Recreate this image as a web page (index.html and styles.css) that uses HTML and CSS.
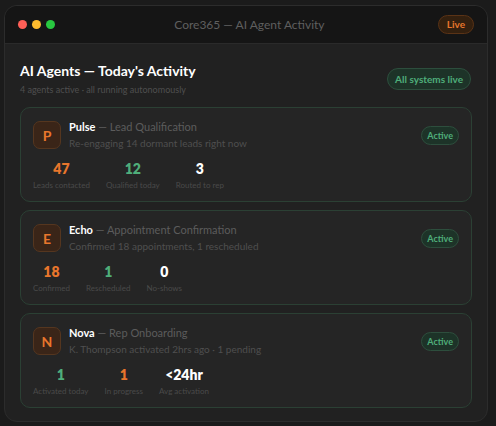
FILE: index.html
```html
<!DOCTYPE html>
<html>
<head>
<meta charset="utf-8">
<link rel="stylesheet" href="styles.css">
</head>
<body>
<div class="window">
  <div class="titlebar">
    <div class="dots">
      <span class="dot dot-red"></span>
      <span class="dot dot-yellow"></span>
      <span class="dot dot-green"></span>
    </div>
    <div class="wtitle">Core365 — AI Agent Activity</div>
    <span class="live">Live</span>
  </div>
  <div class="content">
    <div class="head">
      <div>
        <h1 class="h1">AI Agents — Today's Activity</h1>
        <div class="sub">4 agents active · all running autonomously</div>
      </div>
      <span class="syslive">All systems live</span>
    </div>

    <div class="card">
      <div class="row">
        <div class="avatar">P</div>
        <div class="info">
          <div class="name"><b>Pulse</b> — Lead Qualification</div>
          <div class="desc">Re-engaging 14 dormant leads right now</div>
        </div>
        <span class="active">Active</span>
      </div>
      <div class="stats">
        <div class="stat"><div class="num orange">47</div><div class="lbl">Leads contacted</div></div>
        <div class="stat"><div class="num green">12</div><div class="lbl">Qualified today</div></div>
        <div class="stat"><div class="num white">3</div><div class="lbl">Routed to rep</div></div>
      </div>
    </div>

    <div class="card">
      <div class="row">
        <div class="avatar">E</div>
        <div class="info">
          <div class="name"><b>Echo</b> — Appointment Confirmation</div>
          <div class="desc">Confirmed 18 appointments, 1 rescheduled</div>
        </div>
        <span class="active">Active</span>
      </div>
      <div class="stats">
        <div class="stat"><div class="num orange">18</div><div class="lbl">Confirmed</div></div>
        <div class="stat"><div class="num green">1</div><div class="lbl">Rescheduled</div></div>
        <div class="stat"><div class="num white">0</div><div class="lbl">No-shows</div></div>
      </div>
    </div>

    <div class="card">
      <div class="row">
        <div class="avatar">N</div>
        <div class="info">
          <div class="name"><b>Nova</b> — Rep Onboarding</div>
          <div class="desc">K. Thompson activated 2hrs ago · 1 pending</div>
        </div>
        <span class="active">Active</span>
      </div>
      <div class="stats">
        <div class="stat"><div class="num green">1</div><div class="lbl">Activated today</div></div>
        <div class="stat"><div class="num orange">1</div><div class="lbl">In progress</div></div>
        <div class="stat"><div class="num white">&lt;24hr</div><div class="lbl">Avg activation</div></div>
      </div>
    </div>
  </div>
</div>
</body>
</html>
```

FILE: styles.css
```css
* { box-sizing: border-box; }
html, body { margin: 0; padding: 0; }
body {
  background: #1b1b1b;
  font-family: Lato, "Liberation Sans", sans-serif;
  width: 496px;
  height: 426px;
  overflow: hidden;
  padding: 5px 8px 0 4px;
}
.window {
  width: 484px;
  height: 417px;
  background: #212121;
  border: 1px solid #2c2c2c;
  border-radius: 13px;
  overflow: hidden;
  display: flex;
  flex-direction: column;
}
.titlebar {
  height: 38px;
  flex: none;
  background: #151515;
  border-bottom: 1px solid #2a2a2a;
  display: flex;
  align-items: center;
  padding: 0 13px 0 13px;
}
.dots { display: flex; gap: 5px; }
.dot { width: 9px; height: 9px; border-radius: 50%; display: block; }
.dot-red { background: #ff5f57; }
.dot-yellow { background: #febc2e; }
.dot-green { background: #28c840; }
.wtitle {
  flex: 1;
  text-align: center;
  color: #5f5f5f;
  font-size: 12px;
  padding-left: 6px;
}
.live {
  font-size: 10px;
  font-weight: 700;
  color: #e8762c;
  background: #33200f;
  border: 1px solid #5a3316;
  border-radius: 10px;
  padding: 3px 8px;
  line-height: 11px;
}
.content {
  padding: 18px 15px 0 15px;
  display: flex;
  flex-direction: column;
  gap: 8px;
}
.head {
  display: flex;
  justify-content: space-between;
  align-items: center;
  margin-bottom: 3px;
}
.h1 {
  margin: 0;
  font-size: 14px;
  font-weight: 700;
  color: #ffffff;
  line-height: 18px;
}
.sub {
  margin-top: 4px;
  font-size: 9px;
  color: #4f4f4f;
  line-height: 12px;
}
.syslive {
  font-size: 10px;
  font-weight: 700;
  color: #4fae7a;
  background: #1d3328;
  border: 1px solid #2d4e3d;
  border-radius: 11px;
  padding: 5px 7px;
  line-height: 10px;
  margin-right: 1px;
}
.card {
  background: #252525;
  border: 1px solid #2b4034;
  border-radius: 10px;
  padding: 12px 12px 11px 12px;
  height: 95px;
}
.row {
  display: flex;
  align-items: center;
}
.avatar {
  width: 28px;
  height: 28px;
  border-radius: 7px;
  background: #3a2518;
  border: 1px solid #55361f;
  color: #e8762c;
  font-weight: 700;
  font-size: 14px;
  display: flex;
  align-items: center;
  justify-content: center;
  flex: none;
}
.info {
  flex: 1;
  margin-left: 8px;
}
.name {
  font-size: 11px;
  color: #5c5c5c;
  line-height: 14px;
}
.name b { color: #ffffff; font-weight: 700; }
.desc {
  font-size: 10px;
  color: #4f4f4f;
  line-height: 13px;
  margin-top: 3px;
}
.active {
  font-size: 9px;
  font-weight: 700;
  color: #4fae7a;
  background: #1d3328;
  border: 1px solid #2d4e3d;
  border-radius: 10px;
  padding: 4px 5px;
  line-height: 9px;
}
.stats {
  display: flex;
  gap: 16px;
  margin-top: 10px;
}
.stat { text-align: center; }
.num {
  font-size: 14px;
  font-weight: 800;
  line-height: 18px;
}
.orange { color: #e8762c; }
.green { color: #4fae7a; }
.white { color: #ffffff; }
.lbl {
  font-size: 8px;
  color: #4a4a4a;
  line-height: 11px;
  margin-top: 2px;
}
```
